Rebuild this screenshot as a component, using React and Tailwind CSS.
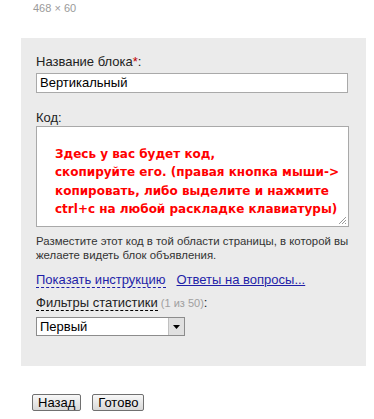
import React from 'react';

const App = () => {
  return (
    <div className="w-[374px] h-[419px] bg-white font-['Liberation_Sans',Arial,sans-serif] text-[#222] overflow-hidden">
      {/* size caption */}
      <div className="pl-[33px] pt-[2px] h-[38px] text-[11px] leading-[13px] text-[#9a9a9a]">468 × 60</div>

      {/* form panel */}
      <div className="ml-[21px] w-[345px] h-[328px] bg-[#ebebeb] pl-[15px] pt-[16px]">
        <div className="text-[13px] leading-[15px] h-[15px]">
          Название блока<span className="text-[#c00000]">*</span>:
        </div>
        <div className="mt-[4px] w-[312px] h-[20px] bg-white border border-[#a9a9a9] pl-[3px] text-[13px] leading-[18px] text-black">
          Вертикальный
        </div>

        <div className="mt-[17px] text-[13px] leading-[15px] h-[15px]">Код:</div>
        <div className="relative mt-[1px] w-[313px] h-[101px] bg-white border border-[#a9a9a9] pl-[18px] pt-[18px] font-['DejaVu_Sans',Verdana,sans-serif] font-bold text-[12px] leading-[18.3px] text-[#ff0000] whitespace-nowrap">
          <div>Здесь у вас будет код,</div>
          <div>скопируйте его. (правая кнопка мыши-&gt;</div>
          <div>копировать, либо выделите и нажмите</div>
          <div>ctrl+c на любой раскладке клавиатуры)</div>
          <svg className="absolute right-[1px] bottom-[1px]" width="10" height="10" viewBox="0 0 10 10">
            <path d="M9 2 L2 9 M9 5 L5 9 M9 8 L8 9" stroke="#9a9a9a" strokeWidth="1" />
          </svg>
        </div>

        <div className="mt-[7px] w-[316px] text-[11.4px] leading-[14px] text-[#333]">
          Разместите этот код в той области страницы, в которой вы желаете видеть блок объявления.
        </div>

        <div className="mt-[10px] flex gap-[11px] text-[13px] leading-[15px] text-[#1f1fa8]">
          <span className="border-b border-dashed border-[#1f1fa8]">Показать инструкцию</span>
          <span className="underline">Ответы на вопросы...</span>
        </div>

        <div className="mt-[7px] text-[13px] leading-[15px]">
          <span className="border-b border-dashed border-black">Фильтры статистики</span>
          <span className="text-[11px] text-[#a0a0a0]"> (1 из 50)</span>:
        </div>

        <div className="mt-[6px] w-[149px] h-[19px] bg-white border border-[#8c8c8c] flex text-[13px] leading-[17px] text-black">
          <span className="flex-1 pl-[3px]">Первый</span>
          <span className="w-[16px] h-[17px] bg-[#e0e0e0] border-l border-[#c0c0c0] flex items-center justify-center">
            <svg width="7" height="4" viewBox="0 0 7 4">
              <path d="M0 0 H7 L3.5 4 Z" fill="#000" />
            </svg>
          </span>
        </div>
      </div>

      {/* buttons */}
      <div className="mt-[28px] pl-[32px] flex gap-[11px]">
        <button className="h-[17px] px-[5px] rounded-[2px] border border-[#707070] bg-gradient-to-b from-[#f8f8f8] to-[#d8d8d8] text-[13px] leading-[15px] text-black">
          Назад
        </button>
        <button className="h-[17px] px-[5px] rounded-[2px] border border-[#707070] bg-gradient-to-b from-[#f8f8f8] to-[#d8d8d8] text-[13px] leading-[15px] text-black">
          Готово
        </button>
      </div>
    </div>
  );
};

export default App;
